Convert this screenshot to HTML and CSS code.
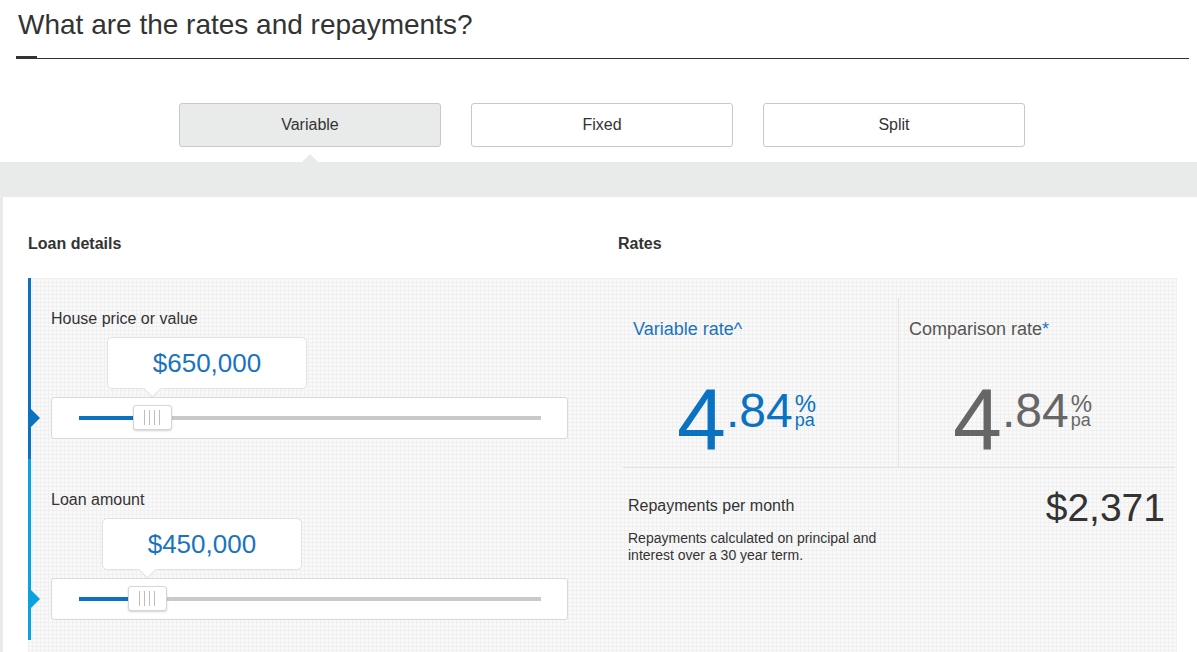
FILE: index.html
```html
<!DOCTYPE html>
<html lang="en">
<head>
<meta charset="utf-8">
<title>Rates and repayments</title>
<link rel="stylesheet" href="styles.css">
</head>
<body>
<header class="page-head">
  <h1 class="title">What are the rates and repayments?</h1>
  <div class="rule"><span class="rule-accent"></span><span class="rule-line"></span></div>
</header>
<nav class="tabs">
  <button class="tab is-active" type="button">Variable</button>
  <button class="tab" type="button">Fixed</button>
  <button class="tab" type="button">Split</button>
</nav>
<div class="band"></div>
<main class="shell">
  <div class="panel">
    <div class="headings">
      <h2 class="heading heading-left">Loan details</h2>
      <h2 class="heading">Rates</h2>
    </div>
    <div class="body">
      <div class="loan">
        <section class="field field-dark" style="--pos: 15.8%">
          <div class="field-label">House price or value</div>
          <div class="bubble-row"><div class="bubble">$650,000</div></div>
          <div class="slider">
            <div class="track"><div class="fill"></div><div class="handle"><i></i><i></i><i></i><i></i></div></div>
          </div>
        </section>
        <section class="field field-light" style="--pos: 14.7%">
          <div class="field-label">Loan amount</div>
          <div class="bubble-row"><div class="bubble">$450,000</div></div>
          <div class="slider">
            <div class="track"><div class="fill"></div><div class="handle"><i></i><i></i><i></i><i></i></div></div>
          </div>
        </section>
      </div>
      <div class="rates">
        <div class="rate-row">
          <div class="rate">
            <div class="rate-label">Variable rate^</div>
            <div class="rate-value"><span class="int">4</span><span class="dec">.84</span><span class="unit"><span class="pct">%</span><span class="pa">pa</span></span></div>
          </div>
          <div class="rate rate-comp">
            <div class="rate-label">Comparison rate<span class="star">*</span></div>
            <div class="rate-value"><span class="int">4</span><span class="dec">.84</span><span class="unit"><span class="pct">%</span><span class="pa">pa</span></span></div>
          </div>
        </div>
        <div class="repay">
          <div class="repay-text">
            <div class="repay-label">Repayments per month</div>
            <p class="repay-note">Repayments calculated on principal and interest over a 30 year term.</p>
          </div>
          <div class="repay-amount">$2,371</div>
        </div>
      </div>
    </div>
  </div>
</main>
</body>
</html>
```

FILE: styles.css
```css
* { box-sizing: border-box; }
body {
  margin: 0;
  font-family: "Liberation Sans", Arial, sans-serif;
  color: #333;
  background: #fff;
}
.page-head { padding: 10px 8px 0 16px; }
.title {
  margin: 0 0 16px;
  padding-left: 2px;
  font-size: 28px;
  line-height: 30px;
  font-weight: normal;
  color: #333;
}
.rule { display: flex; align-items: flex-end; height: 3px; }
.rule-accent { width: 21px; height: 3px; background: #333; }
.rule-line { flex: 1; height: 1px; background: #333; }

.tabs { display: flex; gap: 30px; padding-left: 179px; margin-top: 44px; }
.tab {
  position: relative;
  width: 262px;
  height: 44px;
  border: 1px solid #c8c8c8;
  border-radius: 3px;
  background: #fff;
  font-family: "Liberation Sans", Arial, sans-serif;
  font-size: 16px;
  color: #333;
  padding: 0;
}
.tab.is-active { background: #e9eaea; }
.tab.is-active::after {
  content: "";
  position: absolute;
  left: 50%;
  top: calc(100% + 8px);
  margin-left: -8px;
  border-left: 8px solid transparent;
  border-right: 8px solid transparent;
  border-bottom: 8px solid #e9eaea;
}
.band { margin-top: 15px; height: 35px; background: #e9eaea; }

.shell { background: #e9eaea; padding-left: 3px; }
.panel { background: #fff; padding: 37px 20px 0 25px; }
.headings { display: flex; }
.heading { margin: 0; font-size: 16px; line-height: 20px; font-weight: bold; color: #333; }
.heading-left { width: 590px; }

.body {
  display: flex;
  margin-top: 24px;
  background-color: #f9f9f9;
  background-image:
    linear-gradient(#f0f0f0 1px, transparent 1px),
    linear-gradient(90deg, #f0f0f0 1px, transparent 1px);
  background-size: 4px 4px;
}
.loan { width: 590px; padding-bottom: 14px; }
.field {
  --accent: #0b72c2;
  border-left: 3px solid var(--accent);
  padding: 32px 0 20px 20px;
}
.field-light { --accent: #09a3e2; }
.field-label { font-size: 16px; line-height: 18px; color: #333; }
.bubble-row { margin-top: 9px; width: 517px; padding: 0 27px 0 28px; }
.bubble {
  position: relative;
  width: 200px;
  height: 52px;
  margin-left: calc(var(--pos) - 45px);
  border: 1px solid #e2e2e2;
  border-radius: 5px;
  background: #fff;
  display: flex;
  align-items: center;
  justify-content: center;
  font-size: 26px;
  color: #1a73bf;
}
.bubble::after {
  content: "";
  position: absolute;
  left: 38px;
  bottom: -7px;
  width: 12px;
  height: 12px;
  background: #fff;
  border-right: 1px solid #e2e2e2;
  border-bottom: 1px solid #e2e2e2;
  transform: rotate(45deg);
}
.slider {
  position: relative;
  margin-top: 8px;
  width: 517px;
  height: 42px;
  border: 1px solid #d9d9d9;
  border-radius: 3px;
  background: #fff;
  padding: 18px 26px 0 27px;
}
.slider::before {
  content: "";
  position: absolute;
  left: -21px;
  top: 50%;
  margin-top: -9px;
  border-left: 9px solid var(--accent);
  border-top: 9px solid transparent;
  border-bottom: 9px solid transparent;
}
.track { position: relative; height: 4px; background: #c9c9c9; }
.fill { width: var(--pos); height: 100%; background: #0b72c2; }
.handle {
  position: absolute;
  top: -11px;
  left: calc(var(--pos) - 19px);
  width: 39px;
  height: 25px;
  border: 1px solid #d6d6d6;
  border-radius: 3px;
  background: #fff;
  box-shadow: 0 1px 2px rgba(0, 0, 0, 0.18);
  display: flex;
  align-items: center;
  justify-content: center;
  gap: 4px;
}
.handle i { display: block; width: 1px; height: 15px; background: #bdbdbd; }

.rates { flex: 1; padding: 20px 2px 0 5px; }
.rate-row { display: flex; height: 170px; border-bottom: 1px solid #e4e4e4; }
.rate { flex: 0 0 275px; }
.rate-comp { flex: 1; border-left: 1px solid #e4e4e4; }
.rate-label {
  margin-top: 21px;
  padding-left: 10px;
  font-size: 18px;
  line-height: 20px;
  color: #1a73bf;
}
.rate-comp .rate-label { color: #555; }
.star { color: #1a73bf; }
.rate-value {
  display: flex;
  align-items: flex-start;
  margin-top: 37px;
  padding-left: 54px;
  color: #0b72c2;
}
.rate-comp .rate-value { color: #666; }
.int { font-size: 88px; line-height: 88px; }
.dec { font-size: 48px; line-height: 48px; margin-top: 11px; }
.unit { display: flex; flex-direction: column; margin-top: 18px; margin-left: 2px; }
.pct { font-size: 24px; line-height: 19px; }
.pa { font-size: 18px; line-height: 14px; }

.repay { display: flex; justify-content: space-between; padding: 20px 10px 0 5px; }
.repay-label { margin-top: 9px; font-size: 16px; line-height: 18px; color: #333; }
.repay-note { margin: 15px 0 0; max-width: 268px; font-size: 14px; line-height: 17px; color: #333; }
.repay-amount { font-size: 39px; line-height: 40px; color: #333; }
```
